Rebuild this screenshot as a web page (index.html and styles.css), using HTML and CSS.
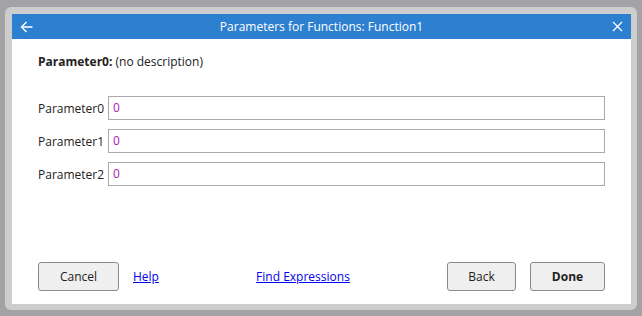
FILE: index.html
```html
<!DOCTYPE html>
<html lang="en">
<head>
    <meta charset="UTF-8">
    <title>Parameters for Functions: Function1</title>
    <link rel="stylesheet" href="styles.css">
</head>
<body>
    <div class="frame">
        <div class="dialog">
            <div class="titlebar">
                <span class="title-icon">
                    <svg width="13" height="12" viewBox="0 0 13 12"><path d="M12.5 6H1.5M6.5 1L1.5 6L6.5 11" fill="none" stroke="#fff" stroke-width="1.4"/></svg>
                </span>
                <span class="title">Parameters for Functions: Function1</span>
                <span class="title-icon title-icon-right">
                    <svg width="11" height="11" viewBox="0 0 11 11"><path d="M1 1L10 10M10 1L1 10" fill="none" stroke="#fff" stroke-width="1.3"/></svg>
                </span>
            </div>

            <div class="content">
                <p class="description"><b>Parameter0:</b> (no description)</p>

                <div class="params">
                    <div class="param-row">
                        <label class="param-label">Parameter0</label>
                        <div class="param-input">0</div>
                    </div>
                    <div class="param-row">
                        <label class="param-label">Parameter1</label>
                        <div class="param-input">0</div>
                    </div>
                    <div class="param-row">
                        <label class="param-label">Parameter2</label>
                        <div class="param-input">0</div>
                    </div>
                </div>

                <div class="footer">
                    <div class="footer-group">
                        <button class="btn btn-cancel">Cancel</button>
                        <a href="#" class="link">Help</a>
                    </div>
                    <a href="#" class="link">Find Expressions</a>
                    <div class="footer-group">
                        <button class="btn btn-back">Back</button>
                        <button class="btn btn-done">Done</button>
                    </div>
                </div>
            </div>
        </div>
    </div>
</body>
</html>
```

FILE: styles.css
```css
* {
    margin: 0;
    padding: 0;
    box-sizing: border-box;
}

body {
    font-family: 'Segoe UI', 'Open Sans', sans-serif;
    font-size: 12px;
    background: #a3a3a6;
    height: 316px;
    padding: 7px 5px 6px 5px;
}

.frame {
    background: #cdcdcd;
    border-radius: 6px;
    padding: 7px 6px 6px 7px;
    height: 303px;
}

.dialog {
    background: white;
    height: 290px;
    display: flex;
    flex-direction: column;
}

.titlebar {
    background: #2d80d0;
    height: 25px;
    display: flex;
    align-items: center;
    justify-content: space-between;
    padding: 0 8px 0 8px;
    color: white;
}

.title {
    font-size: 12px;
}

.title-icon {
    width: 16px;
    display: flex;
    align-items: center;
}

.title-icon-right {
    justify-content: flex-end;
}

.content {
    flex: 1;
    display: flex;
    flex-direction: column;
    padding: 15px 26px 13px 26px;
    color: #222;
}

.description {
    line-height: 16px;
}

.params {
    margin-top: 26px;
    display: flex;
    flex-direction: column;
    gap: 9px;
}

.param-row {
    display: flex;
    align-items: center;
    gap: 4px;
}

.param-label {
    width: 66px;
    text-align: right;
    white-space: nowrap;
}

.param-input {
    flex: 1;
    height: 24px;
    border: 1px solid #a9a9a9;
    color: #b020b0;
    padding-left: 4px;
    line-height: 22px;
}

.footer {
    margin-top: auto;
    display: flex;
    align-items: center;
    justify-content: space-between;
}

.footer-group {
    display: flex;
    align-items: center;
    gap: 14px;
}

.btn {
    font-family: inherit;
    font-size: 12px;
    color: #222;
    height: 29px;
    background: #efefef;
    border: 1px solid #8a8a8a;
    border-radius: 3px;
}

.btn-cancel {
    width: 81px;
}

.btn-back {
    width: 69px;
}

.btn-done {
    width: 75px;
    font-weight: 700;
}

.link {
    color: #0000ee;
    text-decoration: underline;
}
```
